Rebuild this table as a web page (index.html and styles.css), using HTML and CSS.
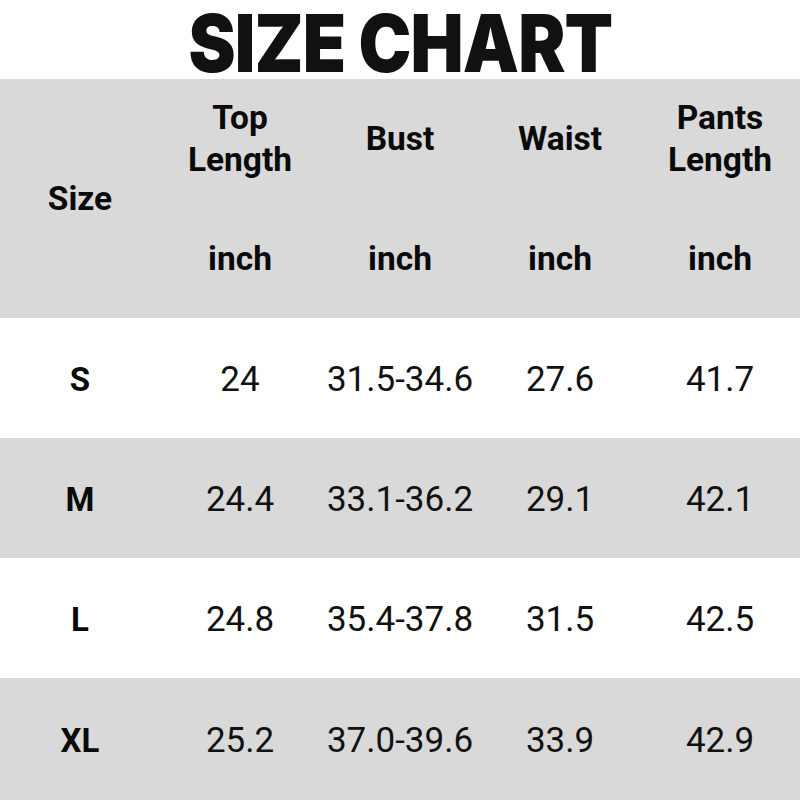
FILE: index.html
```html
<!DOCTYPE html>
<html>
<head>
<meta charset="utf-8">
<link rel="stylesheet" href="styles.css">
</head>
<body>
<div class="title"><span class="title-text">SIZE CHART</span></div>
<div class="head">
  <div class="hcell size">Size</div>
  <div class="hcell name">Top<br>Length</div>
  <div class="hcell name">Bust</div>
  <div class="hcell name">Waist</div>
  <div class="hcell name">Pants<br>Length</div>
  <div class="hcell unit">inch</div>
  <div class="hcell unit">inch</div>
  <div class="hcell unit">inch</div>
  <div class="hcell unit">inch</div>
</div>
<div class="row">
  <div class="cell sz">S</div><div class="cell">24</div><div class="cell">31.5-34.6</div><div class="cell">27.6</div><div class="cell">41.7</div>
</div>
<div class="row gray">
  <div class="cell sz">M</div><div class="cell">24.4</div><div class="cell">33.1-36.2</div><div class="cell">29.1</div><div class="cell">42.1</div>
</div>
<div class="row">
  <div class="cell sz">L</div><div class="cell">24.8</div><div class="cell">35.4-37.8</div><div class="cell">31.5</div><div class="cell">42.5</div>
</div>
<div class="row gray last">
  <div class="cell sz">XL</div><div class="cell">25.2</div><div class="cell">37.0-39.6</div><div class="cell">33.9</div><div class="cell">42.9</div>
</div>
</body>
</html>
```
FILE: styles.css
```css
html, body {
  margin: 0;
  padding: 0;
  background: #ffffff;
}
body {
  width: 800px;
  height: 800px;
  overflow: hidden;
  font-family: Roboto, "Liberation Sans", sans-serif;
  color: #111111;
}
.title {
  height: 79px;
  display: flex;
  align-items: flex-start;
  justify-content: center;
}
.title-text {
  display: inline-block;
  font-family: Inter, "Liberation Sans", sans-serif;
  font-weight: 900;
  font-size: 80px;
  line-height: 79px;
  letter-spacing: -1px;
  color: #111111;
  transform: scaleX(0.885);
  padding-top: 3px;
  height: 76px;
}
.head {
  display: grid;
  grid-template-columns: repeat(5, 160px);
  grid-template-rows: 120px 119px;
  background: #d9d9d9;
}
.hcell {
  display: flex;
  align-items: center;
  justify-content: center;
  text-align: center;
  font-weight: 700;
  font-size: 33.5px;
  line-height: 42px;
  color: #0a0a0a;
}
.size {
  grid-row: 1 / span 2;
  grid-column: 1;
}
.row {
  display: grid;
  grid-template-columns: repeat(5, 160px);
  height: 120px;
  background: #ffffff;
}
.row.gray {
  background: #d9d9d9;
}
.row.last {
  height: 122px;
}
.cell {
  display: flex;
  align-items: center;
  justify-content: center;
  padding-top: 3px;
  font-size: 35px;
  font-weight: 400;
  color: #111111;
}
.cell.sz {
  font-weight: 700;
  font-size: 33px;
  color: #0a0a0a;
}
```
